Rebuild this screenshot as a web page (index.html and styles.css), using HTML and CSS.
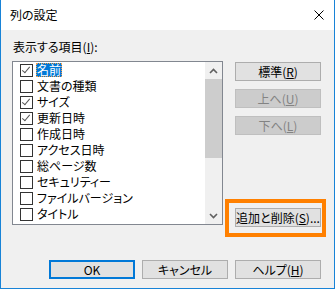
FILE: index.html
```html
<!DOCTYPE html>
<html lang="ja">
<head>
  <meta charset="UTF-8">
  <title>列の設定</title>
  <link rel="stylesheet" href="styles.css">
</head>
<body>
  <div class="window">
    <div class="titlebar">
      <span class="title">列の設定</span>
      <svg class="close" width="10" height="10" viewBox="0 0 10 10">
        <path d="M0.5 0.5 L9.5 9.5 M9.5 0.5 L0.5 9.5" stroke="#000" stroke-width="1"/>
      </svg>
    </div>

    <div class="content">
      <div class="label">表示する項目(<u>I</u>):</div>

      <div class="main">
        <div class="listbox">
          <ul class="items">
            <li><span class="check on"></span><span class="text selected">名前</span></li>
            <li><span class="check"></span><span class="text">文書の種類</span></li>
            <li><span class="check on"></span><span class="text">サイズ</span></li>
            <li><span class="check on"></span><span class="text">更新日時</span></li>
            <li><span class="check"></span><span class="text">作成日時</span></li>
            <li><span class="check"></span><span class="text">アクセス日時</span></li>
            <li><span class="check"></span><span class="text">総ページ数</span></li>
            <li><span class="check"></span><span class="text">セキュリティー</span></li>
            <li><span class="check"></span><span class="text">ファイルバージョン</span></li>
            <li><span class="check"></span><span class="text">タイトル</span></li>
          </ul>
          <div class="scrollbar">
            <div class="arrow">
              <svg width="9" height="6" viewBox="0 0 9 6"><path d="M1 5 L4.5 1.5 L8 5" fill="none" stroke="#606060" stroke-width="1.6"/></svg>
            </div>
            <div class="track"><div class="thumb"></div></div>
            <div class="arrow">
              <svg width="9" height="6" viewBox="0 0 9 6"><path d="M1 1 L4.5 4.5 L8 1" fill="none" stroke="#606060" stroke-width="1.6"/></svg>
            </div>
          </div>
        </div>

        <div class="side">
          <button class="btn">標準(<u>R</u>)</button>
          <button class="btn disabled">上へ(<u>U</u>)</button>
          <button class="btn disabled">下へ(<u>L</u>)</button>
          <div class="mark">
            <button class="btn">追加と削除(<u>S</u>)...</button>
          </div>
        </div>
      </div>

      <div class="footer">
        <button class="btn default">OK</button>
        <button class="btn">キャンセル</button>
        <button class="btn">ヘルプ(<u>H</u>)</button>
      </div>
    </div>
  </div>
</body>
</html>
```

FILE: styles.css
```css
body {
  margin: 0;
  font-family: "Noto Sans CJK JP", "Noto Sans", sans-serif;
  font-size: 12px;
  font-feature-settings: "palt";
  color: #000;
  background: #f0f0f0;
}

.window {
  width: 335px;
  height: 289px;
  box-sizing: border-box;
  border: 1px solid #1883d7;
  border-top: none;
  background: #f0f0f0;
  display: flex;
  flex-direction: column;
}

.titlebar {
  height: 30px;
  background: #ffffff;
  display: flex;
  align-items: center;
  justify-content: space-between;
  padding: 0 10px 0 9px;
}

.title {
  line-height: 16px;
  color: #000;
}

.close {
  display: block;
}

.content {
  padding: 9px 13px 0 11px;
}

.label {
  line-height: 16px;
  padding-left: 1px;
}

.label u,
.btn u {
  text-decoration-thickness: 1px;
  text-underline-offset: 1px;
}

.main {
  display: flex;
  margin-top: 6px;
}

.listbox {
  flex-shrink: 0;
  width: 211px;
  height: 164px;
  box-sizing: border-box;
  border: 1px solid #828790;
  background: #ffffff;
  display: flex;
}

.items {
  flex: 1;
  list-style: none;
  margin: 0;
  padding: 0 0 0 7px;
}

.items li {
  height: 16px;
  display: flex;
  align-items: center;
}

.check {
  width: 13px;
  height: 13px;
  box-sizing: border-box;
  border: 1px solid #333333;
  background: #ffffff;
  margin-right: 3px;
  position: relative;
}

.check.on::after {
  content: "";
  position: absolute;
  left: 3px;
  top: 0px;
  width: 3px;
  height: 7px;
  border-right: 1.5px solid #555555;
  border-bottom: 1.5px solid #555555;
  transform: rotate(40deg);
}

.text {
  line-height: 14px;
  padding: 0 1px;
  white-space: nowrap;
}

.text.selected {
  background: #0078d7;
  color: #ffffff;
  outline: 1px dotted #f0a050;
  outline-offset: -1px;
}

.scrollbar {
  width: 17px;
  background: #f0f0f0;
  display: flex;
  flex-direction: column;
}

.arrow {
  height: 17px;
  display: flex;
  align-items: center;
  justify-content: center;
}

.track {
  flex: 1;
}

.thumb {
  height: 79px;
  background: #cdcdcd;
}

.side {
  width: 86px;
  flex-shrink: 0;
  display: flex;
  flex-direction: column;
  gap: 8px;
  margin-left: 12px;
  padding-top: 1px;
}

.btn {
  width: 86px;
  height: 19px;
  box-sizing: border-box;
  border: 1px solid #adadad;
  background: #e1e1e1;
  font-family: inherit;
  font-size: 12px;
  font-feature-settings: "palt";
  color: #000;
  padding: 0;
  line-height: 16px;
}

.btn.disabled {
  background: #cccccc;
  border-color: #bfbfbf;
  color: #838383;
}

.btn.default {
  border: 2px solid #0078d7;
}

.mark {
  margin: 56px -5px 0 -10px;
  border: 4px solid #ff8000;
  padding: 5px 1px 6px 6px;
  display: flex;
}

.footer {
  display: flex;
  justify-content: flex-end;
  gap: 7px;
  margin-top: 23px;
}
```
